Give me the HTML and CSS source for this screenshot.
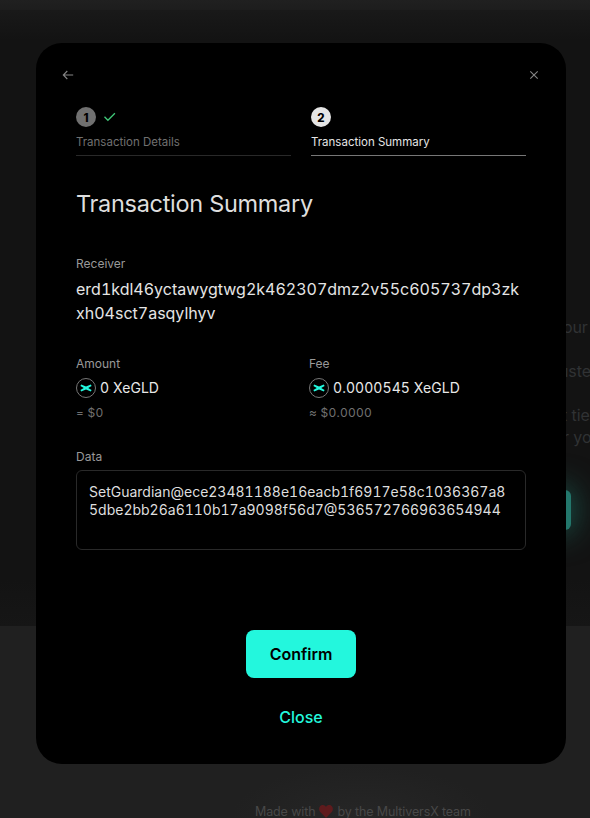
FILE: index.html
```html
<!DOCTYPE html>
<html lang="en">
<head>
<meta charset="utf-8">
<title>Transaction Summary</title>
<link rel="stylesheet" href="styles.css">
</head>
<body>
<div class="page">
  <div class="topbar"></div>
  <main class="backdrop">
    <p class="line first">our</p>
    <p class="line second">uste</p>
    <p class="line third">t tie</p>
    <p class="line fourth">r yo</p>
    <div class="glow-button"></div>
  </main>
  <footer class="footer">
    <span>Made with</span>
    <svg class="heart" viewBox="0 0 14 13"><path d="M7 13 1 6.700C-.5 4.800 0 1.500 2 .5 4-.4 6 .3 7 2 8-.1 10.500-.4 12 .5 14 1.600 14.500 4.800 13 6.700Z"/></svg>
    <span>by the MultiversX team</span>
  </footer>
</div>
<div class="overlay">
  <section class="modal">
    <header class="modal-bar">
      <svg class="icon" width="12" height="12" viewBox="0 0 12 12"><path d="M11.200 6H1.500M5.300 2 1.300 6l4 4"/></svg>
      <svg class="icon" width="10" height="10" viewBox="0 0 10 10"><path d="m1.300 1.300 7.400 7.400m0-7.400L1.300 8.700"/></svg>
    </header>
    <div class="content">
      <div class="steps">
        <div class="step">
          <div class="step-head"><span class="badge">1</span><svg class="check" width="12" height="10" viewBox="0 0 12 10"><path d="m.5 4.700 3.400 3.500L10.900 1.200"/></svg></div>
          <span class="step-name">Transaction Details</span>
        </div>
        <div class="step active">
          <div class="step-head"><span class="badge">2</span></div>
          <span class="step-name">Transaction Summary</span>
        </div>
      </div>
      <h1>Transaction Summary</h1>
      <div class="receiver">
        <div class="label">Receiver</div>
        <div class="address">erd1kdl46yctawygtwg2k462307dmz2v55c605737dp3zk<br>xh04sct7asqylhyv</div>
      </div>
      <div class="amounts">
        <div>
          <div class="label">Amount</div>
          <div class="value"><svg class="token" viewBox="0 0 20 20"><circle cx="10" cy="10" r="9.500"/><path d="M5.200 6.400 10 8.500l4.800-2.100.8 1.500-3.400 2.100 3.400 2.100-.8 1.500-4.800-2.100-4.800 2.100-.8-1.500 3.400-2.100-3.400-2.100Z"/></svg><span>0 XeGLD</span></div>
          <div class="fiat">= $0</div>
        </div>
        <div>
          <div class="label">Fee</div>
          <div class="value"><svg class="token" viewBox="0 0 20 20"><circle cx="10" cy="10" r="9.500"/><path d="M5.200 6.400 10 8.500l4.800-2.100.8 1.500-3.400 2.100 3.400 2.100-.8 1.500-4.800-2.100-4.800 2.100-.8-1.500 3.400-2.100-3.400-2.100Z"/></svg><span>0.0000545 XeGLD</span></div>
          <div class="fiat">≈ $0.0000</div>
        </div>
      </div>
      <div class="label">Data</div>
      <div class="data">SetGuardian@ece23481188e16eacb1f6917e58c1036367a8<br>5dbe2bb26a6110b17a9098f56d7@536572766963654944</div>
      <div class="actions">
        <button class="confirm">Confirm</button>
        <button class="close">Close</button>
      </div>
    </div>
  </section>
</div>
</body>
</html>
```
FILE: styles.css
```css
* { box-sizing: border-box; }
body {
  margin: 0;
  width: 590px;
  height: 818px;
  overflow: hidden;
  display: grid;
  font-family: Inter, "Liberation Sans", sans-serif;
  background: #202020;
}
.page, .overlay { grid-area: 1 / 1; width: 590px; height: 818px; overflow: hidden; }
.page { display: flex; flex-direction: column; }
.topbar { flex: none; height: 10px; background: linear-gradient(#202020, #1d1d1d); }
.backdrop {
  flex: none;
  height: 616px;
  padding: 306px 0 0 563px;
  overflow: hidden;
  background: linear-gradient(#191919, #131313 30px, #131313 570px, #161616);
}
.line { margin: 0; font-size: 16px; line-height: 22px; letter-spacing: -.1px; color: #303234; white-space: nowrap; }
.second { margin-top: 22px; margin-left: -4px; }
.third { margin-top: 22px; margin-left: -1px; }
.fourth { margin-left: 0; }
.glow-button {
  width: 108px;
  height: 40px;
  margin: 42px 0 0 -100px;
  border-radius: 6px;
  background: #23776c;
  box-shadow: 0 0 32px #1b6459;
}
.footer {
  flex: none;
  height: 192px;
  display: flex;
  align-items: flex-start;
  padding: 176px 0 0 255px;
  font-size: 12.5px;
  line-height: 19px;
  letter-spacing: -.12px;
  color: #484848;
  white-space: nowrap;
  background: radial-gradient(ellipse 130px 50px at 362px 190px, #262626, #202020);
}
.heart { width: 14px; height: 13px; margin: 3px 4px 0; fill: #5e1b1d; }
.overlay { position: relative; padding: 43px 24px 54px 36px; }
.modal { height: 721px; border-radius: 26px; background: #000; }
.modal-bar {
  display: flex;
  justify-content: space-between;
  align-items: center;
  height: 64px;
  padding: 0 27px 0 26px;
}
.icon { fill: none; stroke: #858585; stroke-width: 1.1; }
.content { padding: 0 40px; }
.steps { display: grid; grid-template-columns: 215px 215px; gap: 20px; }
.step {
  display: flex;
  flex-direction: column;
  height: 49px;
  border-bottom: 1px solid #292929;
  color: #707070;
}
.step-head { display: flex; align-items: center; gap: 8px; height: 20px; }
.badge {
  width: 20px;
  height: 20px;
  border-radius: 50%;
  background: #707070;
  color: #000;
  font-size: 11.5px;
  font-weight: 800;
  line-height: 22px;
  text-align: center;
}
.check { fill: none; stroke: #40c979; stroke-width: 1.3; }
.step-name { align-self: flex-start; margin-top: 7px; font-size: 11.5px; line-height: 16px; white-space: nowrap; }
.active { color: #e5e5e5; border-color: #777; }
.active .badge { background: #e5e5e5; }
h1 { margin: 31px 0 0; font-size: 23.5px; font-weight: 400; line-height: 34px; letter-spacing: -.3px; color: #dedede; }
.label { font-size: 12px; line-height: 18px; color: #999; }
.receiver { margin-top: 34px; }
.address, .value, .fiat, .data { font-variant-numeric: tabular-nums; }
.address { margin-top: 4px; font-size: 16px; line-height: 24px; color: #e5e5e5; white-space: nowrap; }
.amounts { display: grid; grid-template-columns: 233px 1fr; margin-top: 30px; }
.value { display: flex; align-items: center; gap: 4px; height: 20px; margin-top: 5px; font-size: 14px; letter-spacing: .06px; color: #e8e8e8; white-space: nowrap; }
.value span { padding-bottom: 1px; line-height: 17px; }
.token { width: 20px; height: 20px; }
.token circle { fill: #000; stroke: #777; }
.token path { fill: #23f7dd; }
.fiat { margin-top: 6px; font-size: 12px; line-height: 18px; letter-spacing: .25px; color: #707070; }
.amounts + .label { margin-top: 26px; }
.data {
  height: 80px;
  margin-top: 4px;
  padding: 12px;
  border: 1px solid #292929;
  border-radius: 6px;
  font-size: 14px;
  line-height: 18px;
  color: #dedede;
  white-space: nowrap;
}
.actions { display: flex; flex-direction: column; align-items: center; margin-top: 80px; }
button { border: 0; padding: 0; font: 500 16px/24px Inter, sans-serif; }
.confirm { width: 110px; height: 48px; border-radius: 8px; background: #23f7dd; color: #000; font-weight: 600; }
.close { margin-top: 27px; background: none; color: #23f7dd; }
```
